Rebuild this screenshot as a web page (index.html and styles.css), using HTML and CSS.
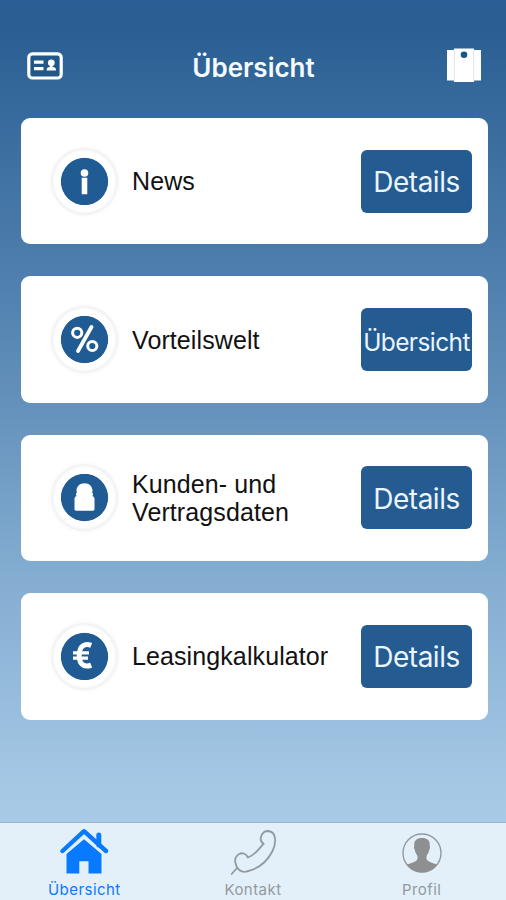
FILE: index.html
```html
<!DOCTYPE html>
<html lang="de">
<head>
<meta charset="utf-8">
<title>Übersicht</title>
<link rel="stylesheet" href="styles.css">
</head>
<body>
<div class="app">
  <header class="header">
    <svg class="header-icon" width="36" height="28" viewBox="0 0 36 28">
      <rect x="1.8" y="1.8" width="32.4" height="24.2" rx="3.6" fill="#215888" stroke="#fff" stroke-width="3.2"/>
      <path d="M7 10.2h9.500M7 16.600h9.500" stroke="#fff" stroke-width="3.200"/>
      <circle cx="24.300" cy="10.800" r="3.400" fill="#fff"/>
      <path d="M23 13h2.600v2c2.500 0 3.400 1 3.400 3.500h-9.400c0-2.500 1-3.500 3.400-3.500z" fill="#fff"/>
    </svg>
    <h1 class="title">Übersicht</h1>
    <svg class="header-icon" width="34" height="36" viewBox="0 0 34 36">
      <path d="M0 2h34v30.500H0z" fill="#fff"/>
      <path d="M7 .500h20v33.500H7z" fill="#fff"/>
      <path d="M7.300 1v32.500M26.700 1v32.500" stroke="#dbe4ee" stroke-width="1"/>
      <circle cx="17" cy="6.800" r="3.300" fill="#1c548a"/>
    </svg>
  </header>
  <main class="cards">
    <section class="card">
      <svg class="card-icon" viewBox="0 0 48 48">
        <circle cx="24" cy="24" r="23.700"/>
        <g fill="#fff"><circle cx="24" cy="15.500" r="3.800"/><path d="M21.200 20.200h5.600v16.500h-5.600z"/></g>
      </svg>
      <span class="label">News</span>
      <button class="button">Details</button>
    </section>
    <section class="card">
      <svg class="card-icon" viewBox="0 0 48 48">
        <circle cx="24" cy="24" r="23.700"/>
        <g fill="none" stroke="#fff" stroke-width="3"><circle cx="16.700" cy="17.300" r="4.600"/><circle cx="31.800" cy="30.500" r="4.600"/><path d="M31 11.500L17.500 35.500" stroke-width="3.800" stroke-linecap="round"/></g>
      </svg>
      <span class="label">Vorteilswelt</span>
      <button class="button button-small">Übersicht</button>
    </section>
    <section class="card">
      <svg class="card-icon" viewBox="0 0 48 48">
        <circle cx="24" cy="24" r="23.700"/>
        <path d="M24 9.800c4.600 0 8 3.200 8 7.200 0 .9-.1 1.500-.4 2.200 1.300.6 1.300 2.400.2 3.200 1.500.4 2.200 1.400 2.200 3v10.200c0 1-.6 1.600-1.600 1.600H15.600c-1 0-1.600-.6-1.600-1.600V25.400c0-1.600.7-2.600 2.200-3-1.100-.8-1.100-2.600.2-3.200-.3-.7-.4-1.300-.4-2.200 0-4 3.400-7.200 8-7.200z" fill="#fff"/>
      </svg>
      <span class="label">Kunden- und<br>Vertragsdaten</span>
      <button class="button">Details</button>
    </section>
    <section class="card">
      <svg class="card-icon" viewBox="0 0 48 48">
        <circle cx="24" cy="24" r="23.700"/>
        <path d="M30.700 12.900c-6-2.500-12 .2-12 10s6 12.300 12 9.700" fill="none" stroke="#fff" stroke-width="5"/>
        <path d="M12.500 20.300H28.500M12.500 25.700H27.500" stroke="#fff" stroke-width="3.200"/>
      </svg>
      <span class="label">Leasingkalkulator</span>
      <button class="button">Details</button>
    </section>
  </main>
  <nav class="tabs">
    <a class="tab tab-active">
      <svg class="tab-icon" viewBox="0 0 50 50">
        <path d="M7.500 26v19.500h12.800V33.200h9.200v12.300h13V26L25 11.200z" fill="currentColor"/>
        <path d="M3.500 24L25 4.200 47 24" fill="none" stroke="#e4f0f9" stroke-width="7.500"/>
        <path d="M3.500 23L25 3.200 47 23" fill="none" stroke="currentColor" stroke-width="4.400" stroke-linecap="round" stroke-linejoin="round"/>
        <path d="M39.800 7v10" stroke="currentColor" stroke-width="5" stroke-linecap="round"/>
      </svg>
      <span>Übersicht</span>
    </a>
    <a class="tab">
      <svg class="tab-icon" viewBox="0 0 50 50">
        <path d="M7.500 35C5 27.500 15.500 20.500 20 29.500C27 27 31 21 35.500 15.800C30 12 33.500 3 40 3C50 4 47.500 17 44.500 23C39 34 30 41 18.500 43.500C13 45 8.500 41 7.500 35zM8.500 40.500L3.700 46" fill="none" stroke="currentColor" stroke-width="1.800" stroke-linecap="round"/>
      </svg>
      <span>Kontakt</span>
    </a>
    <a class="tab">
      <svg class="tab-icon" viewBox="0 0 50 50">
        <circle cx="25" cy="25" r="19" fill="none" stroke="currentColor" stroke-width="1.400"/>
        <path d="M10 36.500c3-1.200 7.500-2 9.500-4 1.500-1.600 1.200-4 .5-5.500-1.300-1.500-2-3.700-2.300-5.500-1-1-1-2.800-.3-4C16.500 12.500 20 10 25 10s8.500 2.500 7.600 7.500c.7 1.200.7 3-.3 4-.3 1.800-1 4-2.300 5.500-.7 1.500-1 3.900.5 5.500 2 2 6.500 2.800 9.500 4-3.500 5-9 7.800-15 7.800S13.500 41.500 10 36.500z" fill="#8d8f90"/>
      </svg>
      <span>Profil</span>
    </a>
  </nav>
</div>
</body>
</html>
```
FILE: styles.css
```css
* { box-sizing: border-box; }
body { margin: 0; }

.app {
  width: 506px;
  height: 900px;
  display: flex;
  flex-direction: column;
  overflow: hidden;
  background: linear-gradient(#2a5e94 0, #2c6094 40px, #376a9c 110px, #4b7cab 255px, #6693bd 415px, #84add1 577px, #a5c8e5 790px, #a8cae6 822px);
  font-family: Inter, "Liberation Sans", sans-serif;
}

.header {
  height: 117.800px;
  padding: 47px 25px 0 27px;
  display: flex;
  justify-content: space-between;
  align-items: flex-start;
}
.header-icon { flex: none; margin-top: 1px; }
.header-icon:first-child { margin-top: 5px; }
.title {
  margin: 4px 3px 0 0;
  color: #f5fbff;
  font-size: 26px;
  line-height: 34px;
  font-weight: 600;
}

.cards {
  flex: 1;
  padding: 0 18px 0 21px;
  display: flex;
  flex-direction: column;
  gap: 31.700px;
}
.card {
  height: 126.700px;
  padding: 0 16px 0 30px;
  display: flex;
  align-items: center;
  border-radius: 9px;
  background: #fff;
}
.card-icon {
  flex: none;
  width: 67px;
  height: 67px;
  padding: 9.500px;
  border-radius: 50%;
  fill: #205b94;
  box-shadow: inset 0 0 3px 2px #f0f0f0, 0 0 4px #f3f3f3;
}
.label {
  flex: 1;
  margin-left: 14px;
  color: #111;
  font: 25px/28px "Liberation Sans", Arial, sans-serif;
  letter-spacing: .1px;
  white-space: nowrap;
}
.button {
  flex: none;
  width: 111px;
  height: 63px;
  padding: 2px 0 0;
  border: 0;
  border-radius: 6px;
  background: #245b91;
  color: #eaf5ff;
  font: 28px/32px Inter, sans-serif;
  letter-spacing: -.5px;
}
.button-small {
  padding-top: 4px;
  font-size: 24.500px;
  letter-spacing: -.6px;
}

.tabs {
  height: 78px;
  display: grid;
  grid-template-columns: repeat(3, 1fr);
  border-top: 1px solid #9db5ca;
  background: #e4f0f9;
}
.tab {
  padding-top: 5px;
  display: flex;
  flex-direction: column;
  align-items: center;
  color: #929a9f;
  font-size: 15px;
  line-height: 18px;
  letter-spacing: .45px;
}
.tab-active { color: #077aff; }
.tab-icon { width: 50px; height: 50px; margin-bottom: 3px; }
```
